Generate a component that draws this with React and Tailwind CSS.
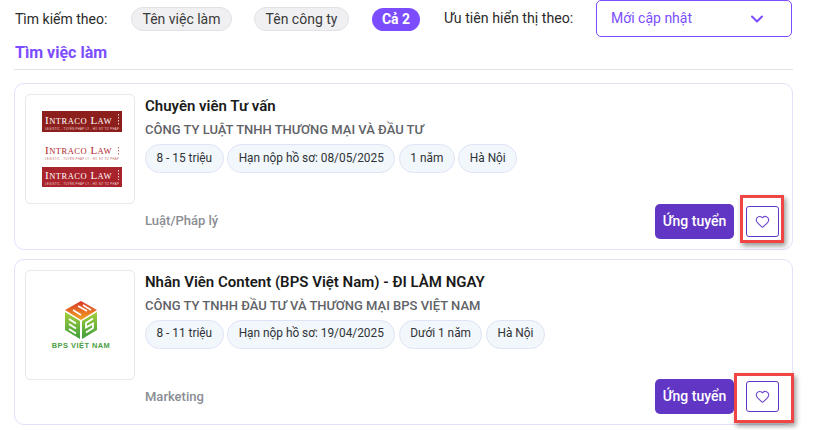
import { ChevronDown, Heart } from "lucide-react";

const JOBS = [
  {
    title: "Chuyên viên Tư vấn",
    company: "CÔNG TY LUẬT TNHH THƯƠNG MẠI VÀ ĐẦU TƯ",
    tags: ["8 - 15 triệu", "Hạn nộp hồ sơ: 08/05/2025", "1 năm", "Hà Nội"],
    field: "Luật/Pháp lý",
    logo: <IntracoLogo />,
    mark: "absolute right-[8px] top-[111px] w-[44px] h-[48px] border-[3px] border-[#f04545] shadow-[2px_3px_5px_rgba(0,0,0,0.4)]",
  },
  {
    title: "Nhân Viên Content (BPS Việt Nam) - ĐI LÀM NGAY",
    company: "CÔNG TY TNHH ĐẦU TƯ VÀ THƯƠNG MẠI BPS VIỆT NAM",
    tags: ["8 - 11 triệu", "Hạn nộp hồ sơ: 19/04/2025", "Dưới 1 năm", "Hà Nội"],
    field: "Marketing",
    logo: <BpsLogo />,
    mark: "absolute right-[-2px] top-[113px] w-[60px] h-[50px] border-[3px] border-[#f04545] shadow-[2px_3px_5px_rgba(0,0,0,0.4)]",
  },
];

function IntracoBar({ y, h, fill, ink, sub }) {
  return (
    <g>
      <rect x="4" y={y} width="80" height={h} fill={fill} />
      <text x="7" y={y + h - 8.5} fontFamily="'Liberation Serif', serif" fontSize="11" letterSpacing="0.5" fill={ink}>
        I<tspan fontSize="8.5">NTRACO</tspan> L<tspan fontSize="8.5">AW</tspan>
      </text>
      <text x="7" y={y + h - 2.5} fontFamily="'Liberation Sans', sans-serif" fontSize="2.8" letterSpacing="0.3" fill={sub}>
        LEGISTIC - TUYỂN PHÁP LÝ - HỒ SƠ TƯ PHÁP
      </text>
      <path d={`M80.5 ${y + 3} V${y + h - 7}`} stroke={sub} strokeWidth="1" strokeDasharray="1.5 1.5" />
    </g>
  );
}

function IntracoLogo() {
  return (
    <svg width="84" height="80" viewBox="0 0 84 80">
      <IntracoBar y={2} h={21} fill="#8c1f1c" ink="#ffffff" sub="#f0d6d6" />
      <IntracoBar y={35} h={18} fill="#ffffff" ink="#b3262c" sub="#c56a6a" />
      <IntracoBar y={58} h={20} fill="#a8232b" ink="#ffffff" sub="#f0d6d6" />
    </svg>
  );
}

function BpsLogo() {
  return (
    <svg width="64" height="56" viewBox="0 0 64 56">
      <defs>
        <linearGradient id="bpsTop" x1="0" y1="0" x2="0" y2="1">
          <stop offset="0" stopColor="#d9352a" />
          <stop offset="1" stopColor="#f2a51f" />
        </linearGradient>
        <linearGradient id="bpsSide" x1="0" y1="0" x2="0" y2="1">
          <stop offset="0" stopColor="#a5cf3a" />
          <stop offset="1" stopColor="#3d9e3f" />
        </linearGradient>
      </defs>
      <path d="M33 4 L49 13 L33 23 L17 13 Z" fill="url(#bpsTop)" />
      <path d="M30 9 L39 14 M35 8 L43 13 M25 13 L33 18" stroke="#fff" strokeWidth="1.6" fill="none" />
      <path d="M17 15 L32 24 L32 42 L17 33 Z" fill="url(#bpsSide)" />
      <path d="M21 22 L28 26.5 M21 27 L28 31.5 M21 32 L28 36.5" stroke="#fff" strokeWidth="1.8" fill="none" />
      <path d="M49 15 L34 24 L34 42 L49 33 Z" fill="url(#bpsSide)" />
      <path d="M45 21.5 L38 26 L38 30.5 L45 26.5 L45 31 L38 35.5" stroke="#fff" strokeWidth="1.8" fill="none" />
      <text x="33" y="51" textAnchor="middle" fontFamily="'Liberation Sans', sans-serif" fontSize="7.4" fontWeight="700" letterSpacing="0.5" fill="#4a9d3f">
        BPS VIỆT NAM
      </text>
    </svg>
  );
}

function JobCard({ job }) {
  return (
    <div className="relative flex h-[166.5px] rounded-[10px] border border-[#e5e0fa] bg-white p-[10px]">
      <div className="flex h-[110px] w-[110px] shrink-0 items-center justify-center rounded-[5px] border border-[#e8e8ee]">
        {job.logo}
      </div>
      <div className="ml-[10px] flex min-w-0 flex-1 flex-col">
        <div className="mt-[2px] text-[15px] leading-[20px] font-semibold text-[#1a1a1a]">{job.title}</div>
        <div className="mt-[5px] text-[13px] leading-[18px] font-medium text-[#5f6368]">{job.company}</div>
        <div className="mt-[5px] flex gap-[3.5px]">
          {job.tags.map((tag) => (
            <span
              key={tag}
              className="flex h-[29px] items-center rounded-full border border-[#dfe3f7] bg-[#f1f7fa] px-[10.5px] text-[11.85px] text-[#303338]"
            >
              {tag}
            </span>
          ))}
        </div>
        <div className="mt-auto flex items-center justify-between pr-[3px]">
          <span className="text-[13px] font-medium text-[#8a8d93]">{job.field}</span>
          <div className="flex items-center gap-[12px]">
            <button className="h-[35px] w-[79px] rounded-[5px] bg-[#6236c5] text-[14px] font-medium text-white">
              Ứng tuyển
            </button>
            <button className="flex h-[31px] w-[33px] items-center justify-center rounded-[3px] border border-[#6236c5] bg-white">
              <Heart size={15} strokeWidth={1.8} className="text-[#6f48cc]" />
            </button>
          </div>
        </div>
      </div>
      <div className={job.mark} />
    </div>
  );
}

export default function App() {
  return (
    <div className="h-[430px] w-[814px] overflow-hidden bg-white pr-[21px] pl-[14px] font-['Roboto',sans-serif]">
      <div className="flex h-[38px] items-center pl-[1px] text-[14px] text-[#2b2b2b]">
        <span className="w-[116px]">Tìm kiếm theo:</span>
        <span className="flex h-[24px] w-[101px] items-center justify-center rounded-full border border-[#e2e2e6] bg-[#f0f0f2] text-[#3a3a3a]">
          Tên việc làm
        </span>
        <span className="ml-[22px] flex h-[24px] w-[95px] items-center justify-center rounded-full border border-[#e2e2e6] bg-[#f0f0f2] text-[#3a3a3a]">
          Tên công ty
        </span>
        <span className="ml-[23px] flex h-[23px] w-[48px] items-center justify-center rounded-full bg-[#7c4dff] font-bold text-white">
          Cả 2
        </span>
        <span className="ml-[24px] w-[152px] text-[14.2px]">Ưu tiên hiển thị theo:</span>
        <div className="flex h-[37px] w-[196px] items-center justify-between self-start rounded-[5px] border border-[#7c4dff] pr-[24px] pl-[14px] text-[#7c4dff]">
          <span>Mới cập nhật</span>
          <ChevronDown size={20} strokeWidth={2.5} />
        </div>
      </div>
      <div className="mt-[4px] h-[28px] border-b border-[#e3e3e6] pl-[1px] text-[16px] leading-[22px] font-bold text-[#7c4dff]">
        Tìm việc làm
      </div>
      <div className="mt-[13px] flex flex-col gap-[9px]">
        {JOBS.map((job) => (
          <JobCard key={job.title} job={job} />
        ))}
      </div>
    </div>
  );
}
